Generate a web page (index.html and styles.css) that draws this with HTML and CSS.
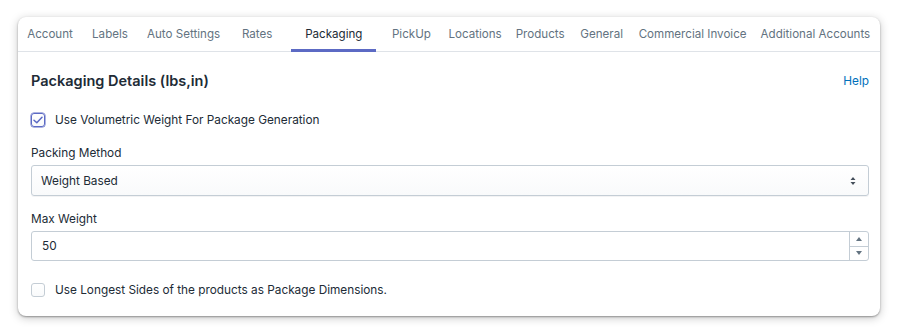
FILE: index.html
```html
<!DOCTYPE html>
<html lang="en">
<head>
    <meta charset="UTF-8">
    <title>Packaging Settings</title>
    <link rel="stylesheet" href="styles.css">
</head>
<body>
    <div class="card">
        <nav class="tabs">
            <a href="#" class="tab">Account</a>
            <a href="#" class="tab">Labels</a>
            <a href="#" class="tab">Auto Settings</a>
            <a href="#" class="tab">Rates</a>
            <a href="#" class="tab active">Packaging</a>
            <a href="#" class="tab">PickUp</a>
            <a href="#" class="tab">Locations</a>
            <a href="#" class="tab">Products</a>
            <a href="#" class="tab">General</a>
            <a href="#" class="tab">Commercial Invoice</a>
            <a href="#" class="tab">Additional Accounts</a>
        </nav>
        <div class="content">
            <div class="section-head">
                <h2>Packaging Details (lbs,in)</h2>
                <a href="#" class="help">Help</a>
            </div>

            <label class="check-row">
                <span class="box checked">
                    <svg width="10" height="8" viewBox="0 0 10 8"><path d="M1 4.2 L3.8 6.8 L9 1.2" fill="none" stroke="#5c6ac4" stroke-width="1.5" stroke-linecap="round" stroke-linejoin="round"/></svg>
                </span>
                Use Volumetric Weight For Package Generation
            </label>

            <div class="field">
                <div class="field-label">Packing Method</div>
                <div class="select">
                    <span>Weight Based</span>
                    <svg width="6" height="10" viewBox="0 0 6 10"><path d="M3 1 L5.5 4 L0.5 4 Z M3 9 L5.5 6 L0.5 6 Z" fill="#454f5b"/></svg>
                </div>
            </div>

            <div class="field">
                <div class="field-label">Max Weight</div>
                <div class="number">
                    <span class="value">50</span>
                    <div class="spinner">
                        <div class="spin"><svg width="6" height="4" viewBox="0 0 6 4"><path d="M3 0 L6 4 L0 4 Z" fill="#637381"/></svg></div>
                        <div class="spin"><svg width="6" height="4" viewBox="0 0 6 4"><path d="M3 4 L6 0 L0 0 Z" fill="#637381"/></svg></div>
                    </div>
                </div>
            </div>

            <label class="check-row last">
                <span class="box"></span>
                Use Longest Sides of the products as Package Dimensions.
            </label>
        </div>
    </div>
</body>
</html>
```

FILE: styles.css
```css
body {
    margin: 0;
    padding: 17px 20px 18px 18px;
    background-color: #ffffff;
    font-family: Inter, "Noto Sans", sans-serif;
    font-size: 11.8px;
    color: #212b36;
}

.card {
    background-color: #ffffff;
    border-radius: 8px;
    box-shadow: 0 1px 2px rgba(0, 0, 0, 0.35), 0 2px 10px rgba(0, 0, 0, 0.22);
    height: 299px;
    overflow: hidden;
}

.tabs {
    display: flex;
    height: 34px;
    border-bottom: 1px solid #dfe3e8;
    padding-left: 2px;
}

.tab {
    box-sizing: border-box;
    min-width: 60px;
    display: flex;
    align-items: center;
    justify-content: center;
    padding: 1px 7px 0;
    font-size: 11.6px;
    color: #637381;
    text-decoration: none;
    border-bottom: 3px solid transparent;
    margin-bottom: -1px;
    white-space: nowrap;
}

.tab.active {
    color: #212b36;
    border-bottom-color: #5c6ac4;
    padding: 1px 14px 0;
    margin: 0 5px -1px 4px;
}

.content {
    padding: 0 11px 0 13px;
}

.section-head {
    display: flex;
    justify-content: space-between;
    align-items: center;
    margin-top: 18px;
    height: 20px;
}

.section-head h2 {
    margin: 0;
    font-size: 14.5px;
    font-weight: 600;
    color: #212b36;
}

.help {
    color: #006fbb;
    text-decoration: none;
    margin-top: 2px;
}

.check-row {
    display: flex;
    align-items: center;
    gap: 10px;
    margin-top: 21px;
    height: 18px;
    color: #212b36;
}

.box {
    width: 12px;
    height: 12px;
    border: 1px solid #c4cdd5;
    border-radius: 3px;
    display: flex;
    align-items: center;
    justify-content: center;
    background: linear-gradient(#ffffff, #f9fafb);
}

.box.checked {
    border-color: #5c6ac4;
    box-shadow: 0 0 0 0.5px #5c6ac4;
}

.field {
    margin-top: 15px;
}

.field + .field {
    margin-top: 14px;
}

.field-label {
    height: 18px;
    line-height: 18px;
    margin-bottom: 3px;
}

.select {
    height: 29px;
    border: 1px solid #c4cdd5;
    border-radius: 3px;
    background: linear-gradient(#ffffff, #f9fafb);
    box-shadow: 0 1px 0 rgba(22, 29, 37, 0.05);
    display: flex;
    align-items: center;
    justify-content: space-between;
    padding: 0 12px 0 9px;
}

.number {
    height: 28px;
    border: 1px solid #c4cdd5;
    border-radius: 3px;
    display: flex;
    align-items: stretch;
    justify-content: space-between;
}

.number .value {
    display: flex;
    align-items: center;
    padding-left: 10px;
}

.spinner {
    width: 18px;
    border-left: 1px solid #c4cdd5;
    display: flex;
    flex-direction: column;
}

.spin {
    flex: 1;
    display: flex;
    align-items: center;
    justify-content: center;
}

.spin + .spin {
    border-top: 1px solid #c4cdd5;
}

.check-row.last {
    margin-top: 20px;
}
```
